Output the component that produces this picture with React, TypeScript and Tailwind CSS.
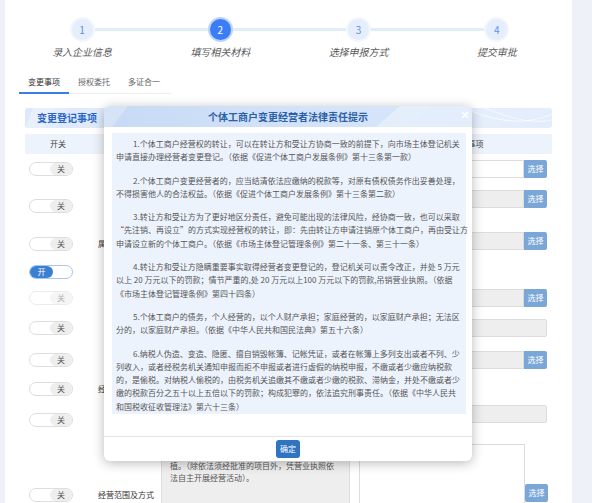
import React from 'react';
import { X } from 'lucide-react';

const steps = ['录入企业信息', '填写相关材料', '选择申报方式', '提交审批'];
const tabs = ['变更事项', '授权委托', '多证合一'];

const paragraphs: string[][] = [
  [
    '1.个体工商户经营权的转让，可以在转让方和受让方协商一致的前提下，向市场主体登记机关',
    '申请直接办理经营者变更登记。（依据《促进个体工商户发展条例》第十三条第一款）',
  ],
  [
    '2.个体工商户变更经营者的，应当结清依法应缴纳的税款等，对原有债权债务作出妥善处理，',
    '不得损害他人的合法权益。（依据《促进个体工商户发展条例》第十三条第二款）',
  ],
  [
    '3.转让方和受让方为了更好地区分责任，避免可能出现的法律风险，经协商一致，也可以采取',
    '“先注销、再设立”的方式实现经营权的转让，即：先由转让方申请注销原个体工商户，再由受让方',
    '申请设立新的个体工商户。（依据《市场主体登记管理条例》第二十一条、第三十一条）',
  ],
  [
    '4.转让方和受让方隐瞒重要事实取得经营者变更登记的，登记机关可以责令改正，并处 5 万元',
    '以上 20 万元以下的罚款；情节严重的,处 20 万元以上100 万元以下的罚款,吊销营业执照。（依据',
    '《市场主体登记管理条例》第四十四条）',
  ],
  [
    '5.个体工商户的债务，个人经营的，以个人财产承担；家庭经营的，以家庭财产承担；无法区',
    '分的，以家庭财产承担。（依据《中华人民共和国民法典》第五十六条）',
  ],
  [
    '6.纳税人伪造、变造、隐匿、擅自销毁帐簿、记帐凭证，或者在帐簿上多列支出或者不列、少',
    '列收入，或者经税务机关通知申报而拒不申报或者进行虚假的纳税申报，不缴或者少缴应纳税款',
    '的，是偷税。对纳税人偷税的，由税务机关追缴其不缴或者少缴的税款、滞纳金，并处不缴或者少',
    '缴的税款百分之五十以上五倍以下的罚款；构成犯罪的，依法追究刑事责任。（依据《中华人民共',
    '和国税收征收管理法》第六十三条）',
  ],
];

function Toggle({ on = false, dim = false }: { on?: boolean; dim?: boolean }) {
  if (on) {
    return (
      <div className="w-[44px] h-[14px] rounded-full border border-[#a6c7ee] bg-white flex">
        <span className="w-[23px] h-full rounded-full bg-[#3a80d2] text-white text-[8px] leading-[12px] text-center">开</span>
      </div>
    );
  }
  return (
    <div className={`w-[44px] h-[14px] rounded-full border bg-white flex justify-end ${dim ? 'border-[#ececec]' : 'border-[#dddddd]'}`}>
      <span className={`w-[22px] h-full rounded-full text-[8px] leading-[12px] text-center ${dim ? 'bg-[#f5f5f5] text-[#b0b0b0]' : 'bg-[#eeeeee] text-[#555]'}`}>关</span>
    </div>
  );
}

function Field({ btn = true, white = false }: { btn?: boolean; white?: boolean }) {
  return (
    <div className="flex">
      <div className={`h-[18px] border border-[#dcdcdc] rounded-l-[2px] ${btn ? 'w-[165px]' : 'w-[188px] rounded-r-[2px]'} ${white ? 'bg-white' : 'bg-[#eeeeee]'}`} />
      {btn && (
        <div className="w-[23px] h-[18px] bg-[#7aa7d8] text-white text-[8px] leading-[18px] text-center rounded-r-[2px]">选择</div>
      )}
    </div>
  );
}

type RowDef = { h: number; on?: boolean; dim?: boolean; label?: string; right?: React.ReactNode; rightTop?: number };

// labels of the other rows sit under the dialog
const rows: RowDef[] = [
  { h: 30, right: <Field white /> },
  { h: 44, right: <Field />, rightTop: 6 },
  { h: 32, label: '属地市场监管所', right: <Field />, rightTop: 4 },
  { h: 23, on: true },
  { h: 30, dim: true, right: <Field /> },
  { h: 30, right: <Field btn={false} /> },
  { h: 34, right: <Field /> },
  { h: 24, label: '经营者证件号码' },
  { h: 38, right: <Field btn={false} />, rightTop: 4 },
];

export default function App() {
  return (
    <div className="relative w-[592px] h-[503px] overflow-hidden bg-[#eef2f8] flex font-['Noto_Sans_CJK_SC','Noto_Sans',sans-serif] text-[#333]">
      <div className="w-[5px] shrink-0" />
      <main className="w-[567px] shrink-0 bg-white">
        {/* steps */}
        <div className="relative ml-[8px] w-[553px] pt-[19px] grid grid-cols-4">
          <div className="absolute top-[28px] left-[69px] right-[69px] h-[3px] bg-[#e3ecfb]" />
          {steps.map((s, i) => (
            <div key={s} className="relative flex flex-col items-center">
              <div
                className={`w-[21px] h-[21px] rounded-full flex items-center justify-center text-[10px] ${
                  i === 1
                    ? 'bg-[#3b7df5] text-white shadow-[0_0_0_2px_#bcd3fb]'
                    : 'bg-[#e6eefc] text-[#5b8ef2] shadow-[0_0_0_2px_#f2f6fe]'
                }`}
              >
                {i + 1}
              </div>
              <div className="mt-[5px] leading-[14px] text-[10px] italic text-[#5a5a5a]">{s}</div>
            </div>
          ))}
        </div>

        {/* tabs */}
        <div className="mt-[13px] ml-[14px] w-[152px] flex border-b border-[#eeeeee]">
          {tabs.map((t, i) => (
            <div
              key={t}
              className={`w-[50px] pt-[4px] pb-[4px] leading-[12px] text-center text-[8px] border-b-2 -mb-px ${
                i === 0 ? 'border-[#3a7de8] text-[#333]' : 'border-transparent text-[#666]'
              }`}
            >
              {t}
            </div>
          ))}
        </div>

        {/* section header */}
        <div className="relative mt-[14px] ml-[20px] w-[527px] h-[20px] rounded-[3px] overflow-hidden bg-gradient-to-r from-[#dce8fb] via-[#e9f1fd] to-[#e4edfc]">
          <svg className="absolute inset-0" width="527" height="20" viewBox="0 0 527 20">
            <polygon points="8,0 30,0 18,20 0,20" fill="#ffffff" opacity="0.35" />
            <polygon points="30,0 44,0 30,20 18,20" fill="#ffffff" opacity="0.2" />
            <path d="M440 0 C 470 14, 500 18, 527 6" stroke="#ffffff" strokeWidth="1" fill="none" opacity="0.7" />
            <path d="M460 0 C 485 10, 505 16, 527 12" stroke="#ffffff" strokeWidth="1" fill="none" opacity="0.6" />
          </svg>
          <div className="relative pl-[12px] leading-[20px] text-[10px] font-bold text-[#2a66c8]">变更登记事项</div>
        </div>

        {/* table header */}
        <div className="mt-[6px] ml-[20px] w-[527px] h-[20px] bg-[#edf3fc] flex items-center text-[8px] text-[#444]">
          <div className="w-[66px] text-center">开关</div>
          <div className="w-[70px]" />
          <div className="w-[189px]" />
          <div className="w-[9px]" />
          <div className="w-[193px] text-center">变更后登记事项</div>
        </div>

        {/* rows */}
        <div className="ml-[20px] w-[527px]">
          {rows.map((r, i) => (
            <div key={i} className="flex items-center text-[8px] text-[#333]" style={{ height: r.h }}>
              <div className="w-[66px] pl-[4px]">
                <Toggle on={r.on} dim={r.dim} />
              </div>
              <div className="w-[70px] text-center whitespace-nowrap">{r.label}</div>
              <div className="w-[189px]" />
              <div className="w-[9px]" />
              <div className={`w-[193px] ${r.rightTop ? 'self-start' : ''}`} style={r.rightTop ? { marginTop: r.rightTop } : undefined}>
                {r.right}
              </div>
            </div>
          ))}
          <div className="flex h-[112px] text-[8px]">
            <div className="w-[66px] pl-[4px] self-center">
              <Toggle />
            </div>
            <div className="w-[70px] text-center self-center whitespace-nowrap">经营范围及方式</div>
            <div className="w-[189px] mt-[5px] bg-[#eeeeee] border border-[#dddddd] px-[8px] pt-[15px] leading-[12px] text-[#555]">
              <div>植。（除依法须经批准的项目外，凭营业执照依</div>
              <div>法自主开展经营活动）。</div>
            </div>
            <div className="w-[9px]" />
            <div className="w-[193px] flex">
              <div className="w-[166px] h-[107px] mt-[5px] border border-[#dcdcdc] bg-white" />
              <div className="w-[23px] h-[18px] mt-[45px] bg-[#7aa7d8] text-white text-[8px] leading-[18px] text-center rounded-[2px]">选择</div>
            </div>
          </div>
        </div>
      </main>
      <div className="w-[20px] shrink-0" />

      {/* modal */}
      <div className="absolute left-[104px] top-[106px] w-[368px] h-[355px] rounded-[6px] bg-white shadow-[0_2px_12px_rgba(0,0,0,0.28)] overflow-hidden flex flex-col">
        <div className="relative h-[21px] shrink-0 bg-gradient-to-r from-[#c7daf5] via-[#d2e2f8] to-[#d9e7fa]">
          <svg className="absolute inset-0" width="368" height="21" viewBox="0 0 368 21">
            <polygon points="0,0 24,0 8,21 0,21" fill="#ffffff" opacity="0.25" />
            <polygon points="296,0 330,0 306,21 272,21" fill="#ffffff" opacity="0.35" />
            <polygon points="330,0 368,0 368,21 306,21" fill="#e6effc" opacity="0.8" />
          </svg>
          <div className="relative text-center leading-[21px] text-[10px] font-bold text-[#2c61a8]">个体工商户变更经营者法律责任提示</div>
          <X className="absolute right-[2px] top-[4px] text-white" size={10} strokeWidth={3.5} />
        </div>
        <div className="mt-[6px] ml-[8px] mr-[6px] h-[281px] shrink-0 bg-[#edf3fd] px-[4px] pt-[4px] text-[8px] leading-[13.3px] text-[#555]">
          {paragraphs.map((p, i) => (
            <div key={i} className="mb-[10px]">
              {p.map((line, j) => (
                <div key={j} className={`whitespace-nowrap ${j === 0 ? 'pl-[17px]' : ''}`}>
                  {line}
                </div>
              ))}
            </div>
          ))}
        </div>
        <div className="mt-auto h-[25px] border-t border-[#e6e6e6] flex items-center justify-center">
          <div className="w-[24px] h-[18px] rounded-[3px] bg-[#2f74c0] text-white text-[8px] leading-[18px] text-center">确定</div>
        </div>
      </div>
    </div>
  );
}
